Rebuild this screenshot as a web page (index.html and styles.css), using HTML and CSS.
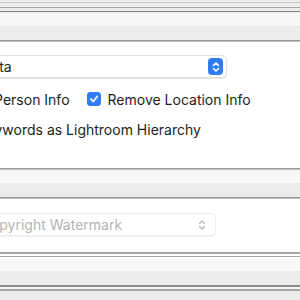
FILE: index.html
```html
<!DOCTYPE html>
<html lang="en">
<head>
  <meta charset="UTF-8" />
  <title>Export Settings</title>
  <link rel="stylesheet" href="styles.css">
</head>
<body>
  <div class="stack">
    <div class="edge edge-top">
      <div class="rule rule-light"></div>
      <div class="rule-gap"></div>
      <div class="rule rule-mid"></div>
      <div class="rule-gap small"></div>
      <div class="rule rule-dark"></div>
    </div>
    <div class="header"></div>
    <div class="divider"></div>

    <!-- metadata section -->
    <div class="body body-meta">
      <div class="popup">
        <span class="popup-label">All Metadata</span>
        <span class="stepper">
          <svg width="8" height="12" viewBox="0 0 8 12"><path d="M1.5 4.5 L4 2 L6.5 4.5 M1.5 7.5 L4 10 L6.5 7.5" fill="none" stroke="#fff" stroke-width="1.6" stroke-linecap="round" stroke-linejoin="round"/></svg>
        </span>
      </div>
      <div class="row row-checks">
        <label class="check"><span class="box"></span>Remove Person Info</label>
        <label class="check"><span class="box on">
          <svg width="10" height="10" viewBox="0 0 10 10"><path d="M2 5.2 L4.2 7.5 L8.2 2.5" fill="none" stroke="#fff" stroke-width="1.8" stroke-linecap="round" stroke-linejoin="round"/></svg>
        </span>Remove Location Info</label>
      </div>
      <div class="row row-keywords">
        <label class="check"><span class="box"></span>Write Keywords as Lightroom Hierarchy</label>
      </div>
    </div>

    <div class="divider"></div>
    <div class="header"></div>
    <div class="divider"></div>

    <!-- watermark section -->
    <div class="body body-mark">
      <div class="popup popup-off">
        <span class="popup-label">Simple Copyright Watermark</span>
        <svg class="chev" width="8" height="12" viewBox="0 0 8 12"><path d="M1.5 4.5 L4 2 L6.5 4.5 M1.5 7.5 L4 10 L6.5 7.5" fill="none" stroke="#b8b8b8" stroke-width="1.3" stroke-linecap="round" stroke-linejoin="round"/></svg>
      </div>
    </div>

    <div class="edge edge-mid">
      <div class="rule rule-mid double"></div>
      <div class="rule-gap"></div>
      <div class="rule rule-mid"></div>
    </div>
    <div class="header"></div>
    <div class="edge edge-bottom">
      <div class="rule rule-dark double"></div>
      <div class="rule-gap"></div>
      <div class="rule rule-mid double"></div>
    </div>
    <div class="footer"></div>
  </div>
</body>
</html>
```

FILE: styles.css
```css
body {
  margin: 0;
  background: #ffffff;
  font-family: Inter, "Noto Sans", sans-serif;
  font-size: 14px;
  color: #1d1d1d;
  overflow: hidden;
}

.stack {
  width: 300px;
  height: 300px;
  overflow: hidden;
}

.edge {
  background: #ededed;
}

.edge-top {
  padding-top: 2px;
  height: 13px;
  box-sizing: border-box;
}

.rule {
  height: 1px;
}

.rule.double {
  height: 2px;
}

.rule-light { background: #c9c9c9; }
.rule-mid { background: #a6a6a6; }
.rule-dark { background: #8a8a8a; }

.rule-gap { height: 4px; }
.rule-gap.small { height: 3px; }

.header {
  height: 27px;
  background: linear-gradient(to bottom, #f8f8f8 0, #f8f8f8 13px, #ececec 13px, #ececec 100%);
}

.divider {
  height: 2px;
  background: linear-gradient(to bottom, #999 0, #999 1px, #bdbdbd 1px);
}

.body {
  background: #ffffff;
  box-sizing: border-box;
}

.body-meta {
  height: 126px;
  padding-top: 13px;
}

.body-mark {
  height: 52px;
  padding-top: 14px;
}

.popup {
  display: flex;
  align-items: center;
  justify-content: space-between;
  height: 23px;
  box-sizing: border-box;
  margin-left: -81px;
  width: 308px;
  padding: 0 3px 0 9px;
  background: #ffffff;
  border: 1px solid #e2e2e2;
  border-radius: 5px;
  box-shadow: 0 1px 1px rgba(0, 0, 0, 0.12);
}

.popup-label {
  white-space: nowrap;
}

.stepper {
  width: 15px;
  height: 17px;
  border-radius: 4px;
  background: #2f7cf5;
  display: flex;
  align-items: center;
  justify-content: center;
}

.popup-off {
  margin-left: -78px;
  width: 294px;
  padding-right: 9px;
  color: #b3b3b3;
  border-color: #ececec;
  box-shadow: 0 1px 1px rgba(0, 0, 0, 0.06);
}

.row {
  display: flex;
  align-items: center;
  height: 22px;
  white-space: nowrap;
}

.row-checks {
  margin-top: 10px;
  margin-left: -84px;
  gap: 17px;
}

.row-keywords {
  margin-top: 8px;
  margin-left: -82px;
}

.check {
  display: flex;
  align-items: center;
  gap: 7px;
}

.box {
  width: 14px;
  height: 14px;
  box-sizing: border-box;
  border-radius: 3px;
  border: 1px solid #c4c4c4;
  background: #ffffff;
  display: flex;
  align-items: center;
  justify-content: center;
}

.box.on {
  background: #2f7cf5;
  border-color: #2f7cf5;
}

.edge-mid {
  background: #ffffff;
  padding-top: 1px;
}

.edge-mid .rule-gap {
  height: 2px;
}

.edge-mid .rule-mid:last-child {
  margin-bottom: 1px;
}

.edge-bottom {
  background: #f3f3f3;
}

.edge-bottom .rule-gap {
  height: 2px;
}

.footer {
  height: 20px;
  background: #ececec;
}
```
